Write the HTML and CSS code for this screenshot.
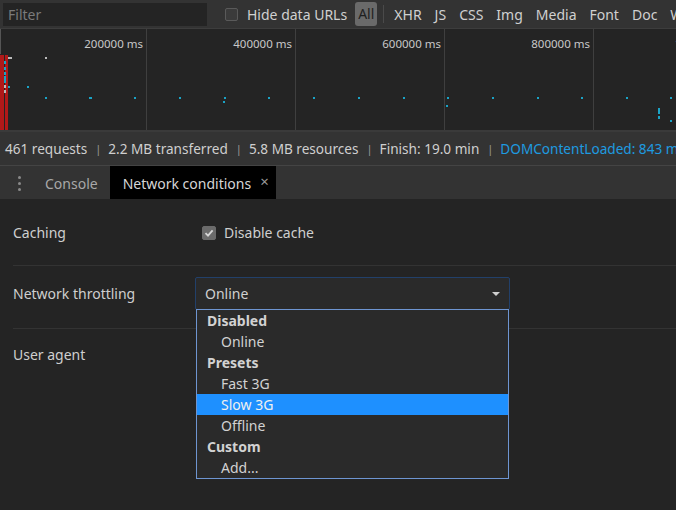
FILE: index.html
```html
<!DOCTYPE html>
<html>
<head>
<meta charset="utf-8">
<link rel="stylesheet" href="styles.css">
</head>
<body>
<div class="app">
  <div class="toolbar">
    <div class="filter">Filter</div>
    <label class="hide-urls"><span class="cb"></span>Hide data URLs</label>
    <span class="all">All</span>
    <span class="tsep"></span>
    <span class="type">XHR</span>
    <span class="type">JS</span>
    <span class="type">CSS</span>
    <span class="type">Img</span>
    <span class="type">Media</span>
    <span class="type">Font</span>
    <span class="type">Doc</span>
    <span class="type">WS</span>
  </div>
  <div class="timeline">
    <div class="cols">
      <div class="col"><span>200000 ms</span></div>
      <div class="col"><span>400000 ms</span></div>
      <div class="col"><span>600000 ms</span></div>
      <div class="col"><span>800000 ms</span></div>
      <div class="col last"><span>1000000 ms</span></div>
    </div>
    <div class="leftline"></div>
    <div class="red r1"></div>
    <div class="red r2"></div>
    <div class="mk g" style="left:8px;top:28px;width:4px"></div>
    <div class="mk g" style="left:45px;top:28px"></div>
    <div class="mk" style="left:4px;top:32px;height:3px"></div>
    <div class="mk" style="left:4px;top:38px;height:3px"></div>
    <div class="mk" style="left:4px;top:43px;height:3px"></div>
    <div class="mk" style="left:4px;top:47px;height:7px"></div>
    <div class="mk g" style="left:4px;top:56px;height:3px"></div>
    <div class="mk g" style="left:4px;top:61px;height:3px"></div>
    <div class="mk" style="left:8px;top:57px"></div>
    <div class="mk" style="left:27px;top:57px;width:2px"></div>
    <div class="mk" style="left:45px;top:68px"></div>
    <div class="mk" style="left:89px;top:68px;width:3px"></div>
    <div class="mk" style="left:134px;top:68px"></div>
    <div class="mk" style="left:179px;top:68px"></div>
    <div class="mk" style="left:224px;top:68px"></div>
    <div class="mk" style="left:223px;top:72px"></div>
    <div class="mk" style="left:268px;top:68px"></div>
    <div class="mk" style="left:313px;top:68px"></div>
    <div class="mk" style="left:358px;top:68px"></div>
    <div class="mk" style="left:403px;top:68px"></div>
    <div class="mk" style="left:447px;top:68px"></div>
    <div class="mk" style="left:446px;top:76px"></div>
    <div class="mk" style="left:492px;top:68px"></div>
    <div class="mk" style="left:537px;top:68px"></div>
    <div class="mk" style="left:581px;top:68px"></div>
    <div class="mk" style="left:626px;top:68px"></div>
    <div class="mk" style="left:670px;top:68px"></div>
    <div class="mk" style="left:658px;top:79px;height:6px"></div>
    <div class="mk" style="left:658px;top:87px;height:3px"></div>
    <div class="mk" style="left:670px;top:91px"></div>
  </div>
  <div class="status">
    <span>461 requests</span><span class="bar">|</span>
    <span>2.2 MB transferred</span><span class="bar">|</span>
    <span>5.8 MB resources</span><span class="bar">|</span>
    <span>Finish: 19.0 min</span><span class="bar">|</span>
    <span class="blue">DOMContentLoaded: 843 ms</span>
  </div>
  <div class="tabs">
    <div class="dots"><i></i><i></i><i></i></div>
    <div class="tab">Console</div>
    <div class="tab active">Network conditions<span class="close">×</span></div>
  </div>
  <div class="content">
    <div class="row first">
      <div class="label">Caching</div>
      <label class="disable"><span class="cb checked"><svg width="10" height="10" viewBox="0 0 10 10"><path d="M1.5 5.2 L4 7.6 L8.6 2.4" fill="none" stroke="#d6d6d6" stroke-width="1.8"/></svg></span>Disable cache</label>
    </div>
    <div class="row second">
      <div class="label">Network throttling</div>
      <div class="select-wrap">
        <div class="select">Online<span class="arrow"></span></div>
        <div class="menu">
          <div class="grp">Disabled</div>
          <div class="opt">Online</div>
          <div class="grp">Presets</div>
          <div class="opt">Fast 3G</div>
          <div class="opt sel">Slow 3G</div>
          <div class="opt">Offline</div>
          <div class="grp">Custom</div>
          <div class="opt">Add...</div>
        </div>
      </div>
    </div>
    <div class="row last">
      <div class="label">User agent</div>
    </div>
  </div>
</div>
</body>
</html>
```

FILE: styles.css
```css
html, body {
  margin: 0;
  padding: 0;
  background: #242424;
  overflow: hidden;
}
.app {
  width: 676px;
  height: 510px;
  font-family: "Noto Sans", "Open Sans", sans-serif;
  font-size: 14px;
  color: #cfcfcf;
  overflow: hidden;
  background: #242424;
}
.toolbar {
  height: 29px;
  background: #333333;
  display: flex;
  align-items: center;
  white-space: nowrap;
  border-bottom: 1px solid #3d3d3d;
  box-sizing: border-box;
}
.toolbar > * { flex-shrink: 0; }
.filter {
  margin-left: 3px;
  width: 204px;
  height: 23px;
  background: #242424;
  color: #7a7a7a;
  line-height: 23px;
  padding-left: 5px;
  box-sizing: border-box;
}
.hide-urls {
  display: flex;
  align-items: center;
  margin-left: 18px;
  color: #d0d0d0;
}
.cb {
  display: inline-block;
  width: 11px;
  height: 11px;
  border: 1px solid #5a5a5a;
  border-radius: 2px;
  background: #3b3b3b;
  margin-right: 9px;
}
.all {
  margin-left: 8px;
  background: #6a6a6a;
  color: #1f1f1f;
  border-radius: 3px;
  padding: 0 3px;
  height: 24px;
  line-height: 24px;
}
.tsep {
  width: 1px;
  height: 18px;
  background: #4a4a4a;
  margin: 0 10px 0 6px;
}
.type {
  margin-right: 13px;
  color: #d0d0d0;
}
.timeline {
  position: relative;
  height: 101px;
  background: #242424;
  border-bottom: 2px solid #3a3a3a;
  overflow: hidden;
}
.cols {
  display: flex;
  height: 100%;
}
.col {
  flex: 0 0 149px;
  box-sizing: border-box;
  border-right: 1px solid #3f3f3f;
  text-align: right;
  padding-right: 3px;
  padding-top: 7px;
  font-size: 11.5px;
  color: #c8c8c8;
  white-space: nowrap;
}
.col:first-child { flex-basis: 147px; }
.col.last { border-right: none; }
.leftline {
  position: absolute;
  left: 0;
  top: 0;
  width: 1px;
  height: 25px;
  background: #555;
}
.red {
  position: absolute;
  top: 26px;
  bottom: 0;
  background: #b01919;
}
.r1 { left: 0; width: 4px; }
.r2 { left: 5px; width: 3px; }
.mk {
  position: absolute;
  width: 2px;
  height: 2px;
  background: #1aa3c6;
}
.mk.g { background: #bcbcbc; height: 2px; }
.status {
  height: 34px;
  background: #333333;
  display: flex;
  align-items: center;
  padding-left: 5px;
  white-space: nowrap;
  border-bottom: 1px solid #444;
  box-sizing: border-box;
  color: #cfcfcf;
  font-size: 13.6px;
}
.bar {
  color: #9a9a9a;
  margin: 0 7px 0 8px;
  font-size: 11px;
}
.blue { color: #1e9be0; }
.tabs {
  height: 33px;
  background: #333333;
  display: flex;
  align-items: stretch;
}
.dots {
  width: 38px;
  display: flex;
  flex-direction: column;
  align-items: center;
  justify-content: center;
  gap: 3px;
  padding-top: 2px;
}
.dots i {
  width: 3px;
  height: 3px;
  border-radius: 50%;
  background: #8a8a8a;
}
.tab {
  display: flex;
  align-items: center;
  padding: 2px 12px 0 7px;
  color: #a8a8a8;
}
.tab.active {
  background: #000;
  color: #d6d6d6;
  padding: 2px 7px 0 13px;
}
.close {
  margin-left: 9px;
  color: #9a9a9a;
  font-size: 15px;
  position: relative;
  top: -3px;
}
.content {
  padding: 0 0 0 13px;
}
.row {
  display: flex;
  align-items: center;
  border-bottom: 1px solid #333;
  box-sizing: border-box;
}
.row.first { height: 67px; padding-top: 1px; }
.row.second {
  height: 63px;
  align-items: flex-start;
  padding-top: 11px;
}
.row.second .label { line-height: 33px; }
.row.last {
  border-bottom: none;
  align-items: flex-start;
  padding-top: 16px;
}
.label {
  width: 182px;
  color: #cfcfcf;
}
.disable {
  display: flex;
  align-items: center;
  margin-left: 7px;
}
.cb.checked {
  width: 12px;
  height: 12px;
  background: #6b6b6b;
  border-color: #6b6b6b;
  display: flex;
  align-items: center;
  justify-content: center;
  margin-right: 8px;
}
.select-wrap {
  position: relative;
}
.select {
  width: 315px;
  height: 33px;
  box-sizing: border-box;
  border: 1px solid #22406a;
  border-radius: 2px;
  background: #2a2a2a;
  padding-left: 9px;
  line-height: 31px;
  position: relative;
  color: #d0d0d0;
}
.arrow {
  position: absolute;
  right: 9px;
  top: 14px;
  width: 0;
  height: 0;
  border-left: 4px solid transparent;
  border-right: 4px solid transparent;
  border-top: 4px solid #cfcfcf;
}
.menu {
  position: absolute;
  left: 1px;
  top: 32px;
  width: 313px;
  box-sizing: border-box;
  border: 1px solid #6e95d1;
  background: #2a2a2a;
  z-index: 2;
}
.grp, .opt {
  height: 21px;
  line-height: 21px;
  color: #d2d2d2;
}
.grp {
  font-weight: bold;
  padding-left: 10px;
}
.opt {
  padding-left: 24px;
}
.opt.sel {
  background: #1e90ff;
  color: #f0f0f0;
}
```
